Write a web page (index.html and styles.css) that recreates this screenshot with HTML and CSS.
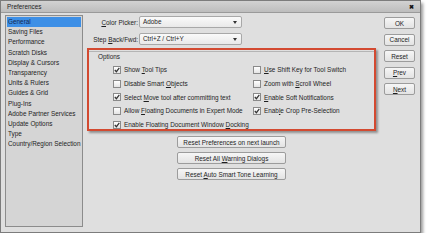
FILE: index.html
```html
<!DOCTYPE html>
<html lang="en">
<head>
    <meta charset="UTF-8">
    <title>Preferences</title>
    <link rel="stylesheet" href="styles.css">
</head>
<body>
    <div class="window">
        <div class="titlebar">
            <span>Preferences</span>
            <span class="close">&#10006;</span>
        </div>
        <div class="content">
            <ul class="nav">
                <li class="active">General</li>
                <li>Saving Files</li>
                <li>Performance</li>
                <li>Scratch Disks</li>
                <li>Display &amp; Cursors</li>
                <li>Transparency</li>
                <li>Units &amp; Rulers</li>
                <li>Guides &amp; Grid</li>
                <li>Plug-Ins</li>
                <li>Adobe Partner Services</li>
                <li>Update Options</li>
                <li>Type</li>
                <li>Country/Region Selection</li>
            </ul>

            <div class="main">
                <div class="field">
                    <label><u>C</u>olor Picker:</label>
                    <div class="select">Adobe</div>
                </div>
                <div class="field">
                    <label>Step <u>B</u>ack/Fwd:</label>
                    <div class="select">Ctrl+Z / Ctrl+Y</div>
                </div>

                <div class="options">
                    <div class="legend">Options</div>
                    <div class="grid">
                        <div class="check on"><span>Show <u>T</u>ool Tips</span></div>
                        <div class="check"><span><u>U</u>se Shift Key for Tool Switch</span></div>
                        <div class="check"><span>Disable Smart <u>O</u>bjects</span></div>
                        <div class="check"><span>Zoom with <u>S</u>croll Wheel</span></div>
                        <div class="check on"><span>Select <u>M</u>ove tool after committing text</span></div>
                        <div class="check on"><span><u>E</u>nable Soft Notifications</span></div>
                        <div class="check"><span>Allow <u>F</u>loating Documents in Expert Mode</span></div>
                        <div class="check on"><span>Enab<u>l</u>e Crop Pre-Selection</span></div>
                        <div class="check on"><span>Enable Floating Document Window <u>D</u>ocking</span></div>
                    </div>
                </div>

                <div class="resets">
                    <button>Reset Preferences on next launch</button>
                    <button>Reset All <u>W</u>arning Dialogs</button>
                    <button>Reset <u>A</u>uto Smart Tone Learning</button>
                </div>
            </div>

            <div class="actions">
                <button>OK</button>
                <button>Cancel</button>
                <button>Reset</button>
                <button><u>P</u>rev</button>
                <button><u>N</u>ext</button>
            </div>
        </div>
    </div>
</body>
</html>
```

FILE: styles.css
```css
body {
    margin: 0;
    background: #fff;
    font-family: "Liberation Sans", Arial, sans-serif;
    font-size: 6.4px;
    color: #1e1e1e;
}
u {
    text-decoration-thickness: 0.5px;
}
.window {
    width: 419px;
    height: 231px;
    border: 1px solid #7c7c7c;
    background: #dfdfdf;
    box-shadow: 2px 3px 3px rgba(0, 0, 0, 0.4);
}
.titlebar {
    height: 11px;
    display: flex;
    align-items: center;
    justify-content: space-between;
    padding: 0 6px 0 6px;
    background: linear-gradient(#d2d2d2, #bdbdbd);
    border-bottom: 1px solid #9a9a9a;
}
.close {
    font-size: 6px;
    font-weight: bold;
    color: #111;
}
.content {
    display: flex;
    padding: 2px 5px 0 4px;
}
.nav {
    list-style: none;
    margin: 0;
    padding: 1px 0 0;
    width: 76px;
    height: 209px;
    border: 1px solid #8c8c8c;
    background: #d5d5d5;
    white-space: nowrap;
}
.nav li {
    height: 10.2px;
    line-height: 9px;
    padding-left: 1px;
    margin: 0 1px;
}
.nav .active {
    background: #3d8fe6;
    color: #132850;
}
.main {
    width: 289px;
    margin-left: 4px;
    padding-top: 1px;
}
.field {
    display: flex;
    align-items: center;
    height: 12px;
    margin-bottom: 5px;
}
.field label {
    width: 51px;
    text-align: right;
    margin-right: 1px;
}
.select {
    position: relative;
    width: 98px;
    height: 10px;
    line-height: 10px;
    padding-left: 3px;
    border: 1px solid #a8a8a8;
    border-radius: 2px;
    background: linear-gradient(#fafafa, #e9e9e9);
}
.select::after {
    content: "";
    position: absolute;
    right: 4px;
    top: 4px;
    border-left: 2.5px solid transparent;
    border-right: 2.5px solid transparent;
    border-top: 3px solid #333;
}
.options {
    margin-top: -2px;
    height: 79px;
    border: 2px solid #d34a31;
    box-shadow: 2px 2px 2px rgba(0, 0, 0, 0.35);
}
.legend {
    margin: 1px 0 0;
    padding: 1px 0 0 9px;
    height: 8px;
    border-top: 1px solid #b4b4b4;
    line-height: 8px;
}
.grid {
    display: grid;
    grid-template-columns: 140px 1fr;
    grid-auto-rows: 13.7px;
    padding: 2px 0 0 24px;
    white-space: nowrap;
}
.check {
    display: flex;
    align-items: center;
}
.check::before {
    content: "";
    width: 6px;
    height: 6px;
    margin-right: 3px;
    border: 1px solid #8a8a8a;
    background: linear-gradient(#fff, #e4e4e4);
}
.check.on::before {
    background:
        url("data:image/svg+xml;utf8,<svg xmlns='http://www.w3.org/2000/svg' viewBox='0 0 6 6'><path d='M0.8 3 L2.4 4.7 L5.3 0.9' fill='none' stroke='%23333' stroke-width='1.2'/></svg>") center / 6px 6px no-repeat,
        linear-gradient(#fff, #e4e4e4);
}
.resets {
    display: flex;
    flex-direction: column;
    align-items: center;
    gap: 4px;
    margin-top: 5px;
}
button {
    font-family: inherit;
    font-size: 6.4px;
    color: #1e1e1e;
    padding: 0;
    height: 12px;
    border: 1px solid #9c9c9c;
    border-radius: 2px;
    background: linear-gradient(#f6f6f6, #e3e3e3);
}
.resets button {
    width: 109px;
}
.actions {
    display: flex;
    flex-direction: column;
    gap: 4.5px;
    margin-left: 8px;
    padding-top: 2px;
}
.actions button {
    width: 31px;
}
```
